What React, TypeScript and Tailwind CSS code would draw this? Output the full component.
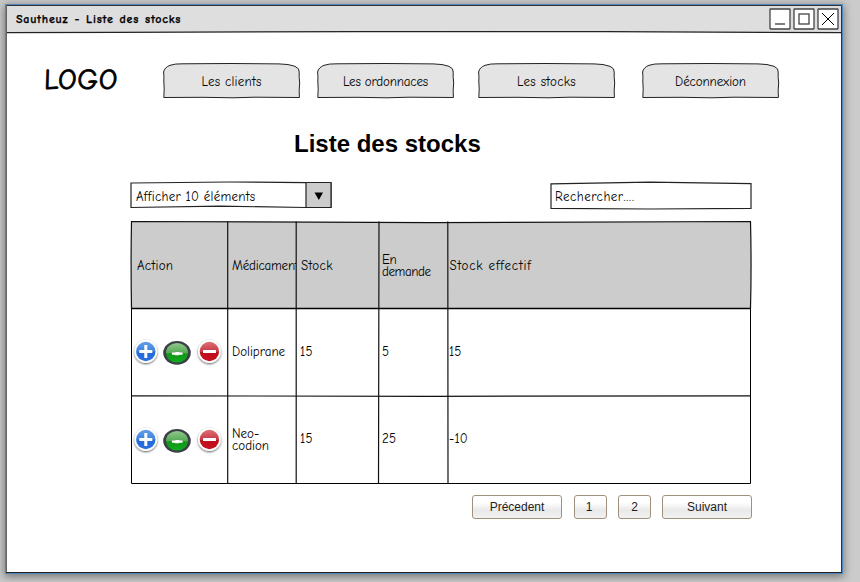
import type { ReactNode } from "react";

const hand = "font-['Comic_Sans_MS','Comic_Neue',Lato,sans-serif]";

function Note({ children, className = "" }: { children: ReactNode; className?: string }) {
  return (
    <span className={`${hand} block whitespace-nowrap text-[13px] leading-[12px] text-black ${className}`}>
      {children}
    </span>
  );
}

function Tab({ label, className, tracking }: { label: string; className: string; tracking: string }) {
  return (
    <button className={`relative flex h-[36px] w-[138px] items-center justify-center ${className}`}>
      <svg className="absolute inset-0" width="138" height="36" fill="none">
        <path
          d="M.8 34.5 Q1.6 26 .8 18 Q1.2 14 .6 9 Q1.5 4.5 7 2.3 Q12 .6 20 .8 L68 .5 L116 .9 Q126 1 132 3.3 Q136.8 5.5 136.2 9 Q135.9 14 136.7 20 Q135.8 27 136.4 34.5 L92 34.2 L70 34.8 L40 34.3 Z"
          fill="#e4e4e4"
          stroke="#222"
        />
      </svg>
      <Note className={`relative pt-px pr-px ${tracking}`}>{label}</Note>
    </button>
  );
}

function TitleButton({ children }: { children: ReactNode }) {
  return (
    <button className="h-[22px] w-[22px]">
      <svg width="22" height="22" fill="none" stroke="#444" strokeWidth="1.3">
        <rect x="1" y="1" width="20" height="20" rx="0.5" fill="#fff" />
        {children}
      </svg>
    </button>
  );
}

function ActionIcons() {
  return (
    <svg className="ml-[2px] block" width="92" height="30" fill="none">
      <g filter="url(#drop)">
        <circle cx="12.8" cy="13.5" r="11.4" fill="#fff" />
        <circle cx="76.4" cy="13.5" r="11.4" fill="#fff" />
      </g>
      <circle cx="12.8" cy="13.5" r="9.7" fill="url(#blue)" />
      <path d="M12.8 7v13M6.3 13.5h13" stroke="#fff" strokeWidth="3" />
      <ellipse cx="44" cy="14.8" rx="13.8" ry="11.9" fill="#3b3e46" />
      <ellipse cx="44" cy="14.8" rx="11" ry="9.8" fill="url(#green)" />
      <path d="M39 14.5h3l1-.5h3l1 .5h2.5v2.3h-3l-1 .5h-3l-1-.5H39z" fill="#fff" />
      <circle cx="76.4" cy="13.5" r="9.7" fill="url(#red)" />
      <path d="M70 13.5h13" stroke="#fff" strokeWidth="3" />
    </svg>
  );
}

function PageButton({ label, className }: { label: string; className: string }) {
  return (
    <button
      className={`h-[24px] rounded-[3px] border border-[#a0917f] bg-linear-to-b from-white from-30% via-[#e9e9e9] via-65% to-[#f2f2f2] pb-px font-['Liberation_Sans',sans-serif] text-[12px] text-[#222] ${className}`}
    >
      {label}
    </button>
  );
}

const rows = [
  { name: ["Doliprane"], stock: "15", demand: "5", effective: "15", iconOffset: "pt-[2px]" },
  { name: ["Neo-", "codion"], stock: "15", demand: "25", effective: "-10", iconOffset: "pt-[4px]" },
];

function Definitions() {
  return (
    <svg className="absolute" width="0" height="0">
      <defs>
        <filter id="drop" x="-30%" y="-30%" width="160%" height="170%">
          <feDropShadow dx="0" dy="1" stdDeviation="1" floodOpacity="0.65" />
        </filter>
        <linearGradient id="blue" x2="0" y2="1">
          <stop stopColor="#65a0e8" />
          <stop offset=".5" stopColor="#3c7fdf" />
          <stop offset=".51" stopColor="#2369d8" />
          <stop offset="1" stopColor="#2a73e2" />
        </linearGradient>
        <linearGradient id="green" x2="0" y2="1">
          <stop stopColor="#8ec78c" />
          <stop offset=".5" stopColor="#58a955" />
          <stop offset=".55" stopColor="#129418" />
          <stop offset="1" stopColor="#0cae1e" />
        </linearGradient>
        <linearGradient id="red" x2="0" y2="1">
          <stop stopColor="#dd7077" />
          <stop offset=".5" stopColor="#c63a43" />
          <stop offset=".51" stopColor="#b90f1c" />
          <stop offset="1" stopColor="#c9101f" />
        </linearGradient>
      </defs>
    </svg>
  );
}

export default function App() {
  return (
    <div className="h-[582px] w-[860px] overflow-hidden bg-[#cbcbcb] pl-[5px] pt-[4px]">
      <Definitions />
      <div className="relative flex h-[570px] w-[838px] flex-col border border-[#4f86bb] bg-white shadow-[0_2px_8px_1px_rgba(0,0,0,0.4)]">
        <svg className="pointer-events-none absolute inset-0" width="836" height="568" fill="none" stroke="#333">
          <path d="M.5 .5H835.5V567.5" />
          <path d="M.5 0V567.5" stroke="#666" />
          <path d="M0 567.5H836" stroke="#222" />
        </svg>
        <header className="flex h-[27px] items-center justify-between bg-[#dedede] pl-[10px] pr-[3px]">
          <Note className="pt-px text-[12px]! font-bold tracking-[0.75px] [word-spacing:1px] [-webkit-text-stroke:0.25px_black]">
            Sautheuz - Liste des stocks
          </Note>
          <div className="flex gap-[2px]">
            <TitleButton>
              <path d="M6 16h10" stroke="#555" strokeWidth="1.5" />
            </TitleButton>
            <TitleButton>
              <rect x="6" y="6" width="10" height="10" />
            </TitleButton>
            <TitleButton>
              <path d="M5 5l12 12M17 5L5 17" strokeWidth="1" stroke="#000" />
            </TitleButton>
          </div>
        </header>
        <svg className="-mt-[2px] block shrink-0" width="836" height="4" fill="none">
          <path d="M0 0H836V1.5L420 .8L0 2Z" fill="#dedede" />
          <path d="M0 2.7L110 2.4L350 1.6L600 1.6L836 2.7" stroke="#222" strokeWidth="1.2" />
        </svg>
        <nav className="mt-[29px] flex h-[36px] shrink-0 pl-[38px]">
          <div
            className={`${hand} flex h-[32px] w-[119px] -skew-x-2 items-center whitespace-nowrap text-[29px] leading-none tracking-[0.6px] text-black [-webkit-text-stroke:0.8px_black]`}
          >
            LOGO
          </div>
          <Tab label="Les clients" className="" tracking="tracking-[0.25px]" />
          <Tab label="Les ordonnaces" className="ml-[16px]" tracking="tracking-[-0.15px]" />
          <Tab label="Les stocks" className="ml-[23px]" tracking="tracking-[0.3px]" />
          <Tab label="Déconnexion" className="ml-[26px]" tracking="tracking-[-0.1px]" />
        </nav>
        <h1 className="ml-[288px] mt-[30px] h-[30px] shrink-0 font-['Liberation_Sans',sans-serif] text-[24px] font-bold leading-[30px] text-black">
          Liste des stocks
        </h1>
        <div className="ml-[124px] mt-[22px] flex h-[30px] w-[622px] shrink-0 justify-between">
          <div className="relative flex h-[28px] w-[202px] items-center pl-[6px]">
            <svg className="absolute inset-0" width="202" height="28" fill="none" stroke="#222" strokeWidth="1.2">
              <path d="M1 2L100 1L201 1.8V26.5L176 26.5L90 25.2L1 26.5Z" fill="#fff" />
              <path d="M176 1.5H201V26.5H176Z" fill="#ccc" />
              <path d="M184.5 11.5H193L188.8 19Z" fill="#000" stroke="none" />
            </svg>
            <Note className="relative pt-[3px] tracking-[0.28px]">Afficher 10 éléments</Note>
          </div>
          <div className="relative flex h-[29px] w-[202px] items-center pl-[5px]">
            <svg className="absolute inset-0" width="202" height="29" fill="none" stroke="#222" strokeWidth="1.2">
              <path d="M1 2.8L100 1.2L201 2.6V27.3L100 28L1 27.3Z" fill="#fff" />
            </svg>
            <Note className="relative pt-[3px] tracking-[0.5px]">
              Rechercher<span className="tracking-[0.8px]">....</span>
            </Note>
          </div>
        </div>
        <div className="relative ml-[125px] mt-[10px] h-[263px] w-[620px] shrink-0">
          <svg
            className="absolute inset-0 overflow-visible"
            width="620"
            height="263"
            fill="none"
            stroke="#111"
            strokeWidth="1.2"
          >
            <path d="M.5 .5L300 1.6L619.5 .5Q620.6 44 619.5 87.5H.5Q-.3 44 .5 .5Z" fill="#ccc" />
            <path d="M.5 87.5H619.5" strokeWidth="1.5" stroke="#000" />
            <path d="M.5 87V262.5H619.5V87" strokeWidth="1" stroke="#000" />
            <path d="M.5 174.8L300 175.3L619.5 174.8" />
            <path d="M96.7 .5V262M165.2 .5V262M248 .5L247.5 262M316.8 .5L317 262" />
          </svg>
          <div className="relative grid h-full grid-cols-[97px_68px_83px_69px_303px] grid-rows-[87px_87px_88px]">
            <Note className="self-center pl-[6px] pt-[2px] tracking-[0.3px]">Action</Note>
            <Note className="self-center overflow-hidden pl-[4px] pt-[2px] tracking-[-0.2px]">Médicament</Note>
            <Note className="self-center pl-[5px] pt-[2px] tracking-[0.4px]">Stock</Note>
            <Note className="self-center pl-[3px] pt-[2px] tracking-[-0.4px]">
              En
              <br />
              demande
            </Note>
            <Note className="self-center pl-[1.5px] pt-[2px] tracking-[0.8px]">Stock effectif</Note>
            {rows.map((row) => (
              <div key={row.name[0]} className="contents">
                <div className={`self-center ${row.iconOffset}`}>
                  <ActionIcons />
                </div>
                <Note className="self-center pl-[4px] pt-px">
                  {row.name.map((part) => (
                    <span key={part} className="block">
                      {part}
                    </span>
                  ))}
                </Note>
                <Note className="self-center pl-[4px] tracking-[0.3px]">{row.stock}</Note>
                <Note className="self-center pl-[3px] tracking-[0.3px]">{row.demand}</Note>
                <Note className="self-center pl-[1px] tracking-[0.2px]">{row.effective}</Note>
              </div>
            ))}
          </div>
        </div>
        <div className="ml-[466px] mt-[11px] flex shrink-0">
          <PageButton label="Précedent" className="w-[90px]" />
          <PageButton label="1" className="ml-[12px] w-[33px] pr-[3px]" />
          <PageButton label="2" className="ml-[11px] w-[33px]" />
          <PageButton label="Suivant" className="ml-[11px] w-[90px]" />
        </div>
      </div>
    </div>
  );
}
